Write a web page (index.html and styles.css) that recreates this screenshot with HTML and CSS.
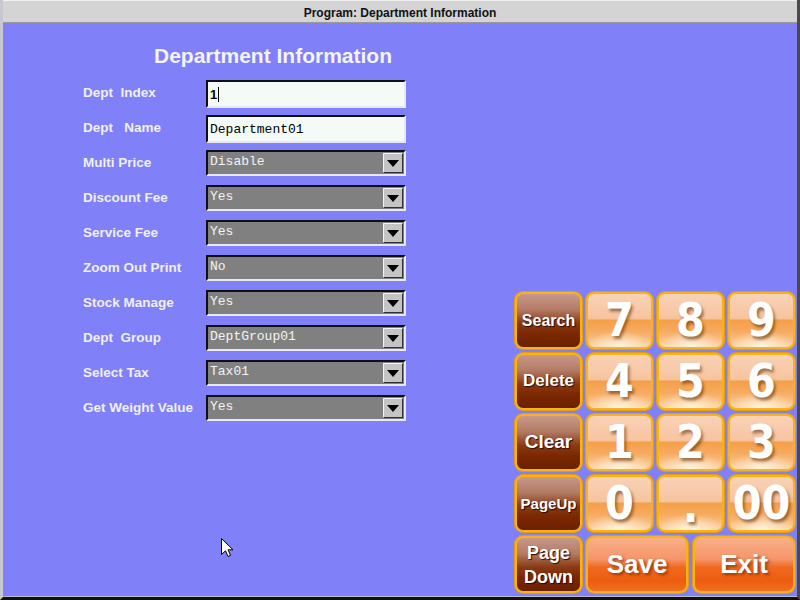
FILE: index.html
```html
<!DOCTYPE html>
<html lang="en">
<head>
    <meta charset="UTF-8">
    <meta name="viewport" content="width=device-width, initial-scale=1.0">
    <title>Program: Department Information</title>
    <link rel="stylesheet" href="styles.css">
</head>
<body>
    <div class="window">
        <div class="titlebar">Program: Department Information</div>

        <div class="content">
            <div class="form">
                <h1 class="heading">Department Information</h1>

                <div class="row">
                    <span class="label">Dept  Index</span>
                    <div class="field input"><span class="typed">1</span><span class="caret"></span></div>
                </div>
                <div class="row">
                    <span class="label">Dept   Name</span>
                    <div class="field input"><span class="value">Department01</span></div>
                </div>
                <div class="row">
                    <span class="label">Multi Price</span>
                    <div class="field select"><span class="value">Disable</span><span class="arrow"></span></div>
                </div>
                <div class="row">
                    <span class="label">Discount Fee</span>
                    <div class="field select"><span class="value">Yes</span><span class="arrow"></span></div>
                </div>
                <div class="row">
                    <span class="label">Service Fee</span>
                    <div class="field select"><span class="value">Yes</span><span class="arrow"></span></div>
                </div>
                <div class="row">
                    <span class="label">Zoom Out Print</span>
                    <div class="field select"><span class="value">No</span><span class="arrow"></span></div>
                </div>
                <div class="row">
                    <span class="label">Stock Manage</span>
                    <div class="field select"><span class="value">Yes</span><span class="arrow"></span></div>
                </div>
                <div class="row">
                    <span class="label">Dept  Group</span>
                    <div class="field select"><span class="value">DeptGroup01</span><span class="arrow"></span></div>
                </div>
                <div class="row">
                    <span class="label">Select Tax</span>
                    <div class="field select"><span class="value">Tax01</span><span class="arrow"></span></div>
                </div>
                <div class="row">
                    <span class="label">Get Weight Value</span>
                    <div class="field select"><span class="value">Yes</span><span class="arrow"></span></div>
                </div>
            </div>

            <div class="keypad">
                <button class="key brown k-search">Search</button>
                <button class="key num">7</button>
                <button class="key num">8</button>
                <button class="key num">9</button>

                <button class="key brown k-delete">Delete</button>
                <button class="key num">4</button>
                <button class="key num">5</button>
                <button class="key num">6</button>

                <button class="key brown k-clear">Clear</button>
                <button class="key num">1</button>
                <button class="key num">2</button>
                <button class="key num">3</button>

                <button class="key brown k-pageup">PageUp</button>
                <button class="key num">0</button>
                <button class="key num dot">.</button>
                <button class="key num">00</button>

                <button class="key brown k-pagedown">Page<br>Down</button>
                <div class="actions">
                    <button class="key action">Save</button>
                    <button class="key action">Exit</button>
                </div>
            </div>
        </div>

        <svg class="pointer" width="13" height="20" viewBox="0 0 13 20">
            <path d="M0.5 0.5 L0.5 16.5 L4.5 12.8 L7 18.5 L9.5 17.4 L7.1 11.8 L12 11.8 Z" fill="#ffffff" stroke="#000000" stroke-width="1"/>
        </svg>
    </div>
</body>
</html>
```

FILE: styles.css
```css
body {
    margin: 0;
    background: #000000;
    font-family: "Liberation Sans", Arial, sans-serif;
}

.window {
    position: relative;
    width: 800px;
    height: 600px;
    box-sizing: border-box;
    display: flex;
    flex-direction: column;
    background: #8080f8;
    border-left: 3px solid #c8c8d0;
    border-right: 3px solid #4a4a4a;
    border-bottom: 3px solid #111111;
    box-shadow: inset 0 -1px 0 #b8b8c8;
}

.titlebar {
    height: 23px;
    box-sizing: border-box;
    background: #d4d4d4;
    border-top: 1px solid #f0f0f0;
    border-bottom: 1px solid #9a9a9a;
    text-align: center;
    font-size: 12px;
    font-weight: bold;
    line-height: 24px;
    color: #111111;
}

.content {
    flex: 1;
    display: flex;
    justify-content: space-between;
    align-items: flex-end;
    padding: 0 2px 4px 80px;
}

/* form */
.form {
    align-self: flex-start;
    padding-top: 20px;
}

.heading {
    margin: 0 0 6px 71px;
    height: 26px;
    font-size: 21px;
    line-height: 26px;
    font-weight: bold;
    color: #f4f4f8;
}

.row {
    display: flex;
    align-items: center;
    height: 35px;
}

.label {
    width: 123px;
    white-space: pre;
    font-size: 13.5px;
    font-weight: bold;
    color: #f0f0f4;
}

.field {
    position: relative;
    width: 200px;
    box-sizing: border-box;
    display: flex;
    align-items: center;
    border: 2px solid;
    border-color: #101010 #e8e8f0 #e8e8f0 #101010;
    font-family: "Liberation Mono", "Courier New", monospace;
    font-size: 13px;
}

.input {
    height: 28px;
    margin-top: 3px;
    padding-left: 2px;
    background: #f4faf6;
    color: #000000;
}

.typed {
    font-family: "Liberation Sans", Arial, sans-serif;
    font-weight: bold;
    font-size: 13px;
}

.caret {
    width: 1px;
    height: 15px;
    margin-left: 1px;
    background: #000000;
}

.select {
    height: 26px;
    padding-left: 2px;
    background: #808080;
    color: #f4f4f4;
}

.select .value {
    margin-top: -3px;
}

.arrow {
    position: absolute;
    right: 1px;
    top: 1px;
    width: 20px;
    height: 20px;
    box-sizing: border-box;
    background: #c4c4c4;
    border: 1px solid;
    border-color: #f4f4f4 #303030 #303030 #f4f4f4;
}

.arrow::after {
    content: "";
    position: absolute;
    left: 3px;
    top: 6px;
    border-left: 6px solid transparent;
    border-right: 6px solid transparent;
    border-top: 7px solid #000000;
}

/* keypad */
.keypad {
    display: grid;
    grid-template-columns: repeat(4, 67px);
    grid-template-rows: repeat(5, 57px);
    gap: 4px;
}

.key {
    box-sizing: border-box;
    margin: 0;
    padding: 0;
    border: 2px solid #f8b414;
    border-radius: 8px;
    box-shadow: 0 0 0 1px #e89a10;
    font-family: "Liberation Sans", Arial, sans-serif;
    font-weight: bold;
    color: #ffffff;
    cursor: pointer;
}

.brown {
    background: linear-gradient(to bottom, #c8988a 0%, #b27a64 30%, #8a3a14 55%, #7a2800 75%, #6c2000 100%);
    text-shadow: 1px 1px 1px #2a0800;
    line-height: 1.2;
}

.k-search { font-size: 16px; }
.k-delete { font-size: 17px; }
.k-clear { font-size: 19px; }
.k-pageup { font-size: 15px; }
.k-pagedown { font-size: 18px; line-height: 24px; }

.num {
    background:
        radial-gradient(ellipse 55% 30% at 50% 100%, rgba(255, 250, 235, 0.9), rgba(255, 250, 235, 0) 100%),
        linear-gradient(to bottom, #f9d2b6 0%, #f7c4a0 46%, #f5a048 50%, #f6aa60 70%, #fbd0a0 100%);
    font-family: "DejaVu Sans Condensed", "DejaVu Sans", sans-serif;
    font-stretch: condensed;
    font-size: 46px;
    line-height: 53px;
    text-shadow: 2px 3px 3px rgba(90, 40, 0, 0.55);
}

.dot {
    line-height: 58px;
}

.actions {
    grid-column: 2 / 5;
    display: grid;
    grid-template-columns: 1fr 1fr;
    gap: 5px;
}

.action {
    background: linear-gradient(to bottom, #f8b088 0%, #f6946a 40%, #f06a20 55%, #ee5c10 80%, #f07020 100%);
    font-size: 26px;
    text-shadow: 2px 2px 3px rgba(90, 30, 0, 0.6);
}

.pointer {
    position: absolute;
    left: 218px;
    top: 538px;
}
```
